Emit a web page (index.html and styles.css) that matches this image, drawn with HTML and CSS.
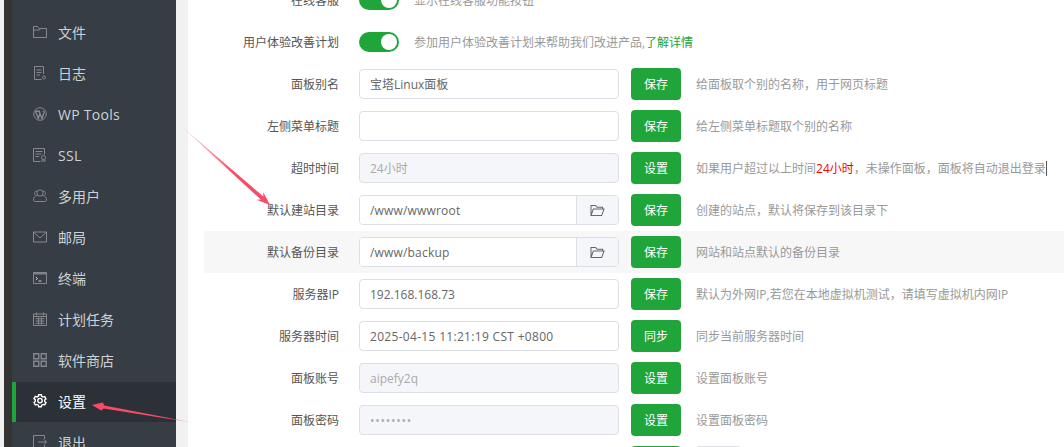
FILE: index.html
```html
<!DOCTYPE html>
<html lang="zh-CN">
<head>
<meta charset="utf-8">
<title>面板设置</title>
<link rel="stylesheet" href="styles.css">
</head>
<body>
<div class="shell">
  <div class="edge"></div>
  <div class="rail"></div>
  <nav class="sidebar">
    <a class="item"><svg class="icon" viewBox="0 0 14 14"><path d="M.5 12.500V1.500h4l1.500 2h7.500v9z M.5 5h6l1-1.500"/></svg><span>文件</span></a>
    <a class="item"><svg class="icon" viewBox="0 0 14 14"><path d="M10.500 8V.5h-9v13h7M3.500 4h5M3.500 6.500h5M3.500 9h3.500"/><circle cx="11" cy="11.500" r="1.500"/></svg><span>日志</span></a>
    <a class="item"><svg class="icon" viewBox="0 0 14 14"><circle cx="7" cy="7" r="6.300"/><path class="thick" d="M2.800 5l2.500 6.500L7 6.500l2 5 2-5.500c.3-1-.3-1.800-1.200-1.800M2 4.300h5M6 4.300l1 2"/></svg><span class="latin">WP Tools</span></a>
    <a class="item"><svg class="icon" viewBox="0 0 14 14"><path d="M7.500 13.500h-7V.5h11v6M2.500 3.500h7M2.500 6h6M2.500 8.500h3.500"/><circle cx="10.500" cy="9.500" r="2"/><path d="M9 11.500v2l1.500-.8 1.500.8v-2"/></svg><span class="latin">SSL</span></a>
    <a class="item"><svg class="icon" viewBox="0 0 14 14"><circle cx="7" cy="4" r="3.200"/><path d="M4.300 6.200C1.500 7 .5 9 .5 11c0 1.200.8 1.500 1.700 1.500h9.600c.9 0 1.700-.3 1.700-1.500 0-2-1-4-3.800-4.800M4 2C2.500 2 1.500 3 1.500 4.500c0 .8.300 1.300.8 1.800M10 2c1.500 0 2.500 1 2.500 2.500 0 .8-.3 1.300-.8 1.800"/></svg><span>多用户</span></a>
    <a class="item"><svg class="icon" viewBox="0 0 14 14"><path d="M.5 2h13v10H.5zM.8 2.500L7 8l6.200-5.500"/></svg><span>邮局</span></a>
    <a class="item"><svg class="icon" viewBox="0 0 14 14"><path d="M.5 1.500h13v11H.5z"/><path class="thick" d="M.5 2.800h13"/><path class="bright" d="M2.800 6l1.700 1.500-1.700 1.500M5.500 10h3"/></svg><span>终端</span></a>
    <a class="item"><svg class="icon" viewBox="0 0 14 14"><path d="M.5 2h13v11.500H.5zM.5 4.500h13M3.500.5v3M10.500.5v3M2.500 6.700h9M2.500 9h9M2.500 11.300h9M5.500 5.500v7M8.500 5.500v7"/></svg><span>计划任务</span></a>
    <a class="item"><svg class="icon" viewBox="0 0 14 14"><path class="thick" d="M.8.800h5v5h-5zM8.200.800h5v5h-5zM.8 8.200h5v5h-5zM8.200 8.200h5v5h-5z"/></svg><span>软件商店</span></a>
    <a class="item active"><svg class="icon" viewBox="0 0 14 14"><path class="thick" d="M5.700.7h2.600l.4 1.700 1.300.7 1.700-.5 1.300 2.200-1.300 1.200v1.500l1.300 1.200-1.300 2.200-1.700-.5-1.300.7-.4 1.700H5.700l-.4-1.700-1.300-.7-1.700.5L1 8.500l1.300-1.200V5.800L1 4.600l1.300-2.200 1.700.5 1.300-.7z"/><circle class="thick" cx="7" cy="6.600" r="2.200"/></svg><span>设置</span></a>
    <a class="item"><svg class="icon" viewBox="0 0 14 14"><path d="M11.500 4V.5H.5v13h11V10M5 7h8.500M11 4.500L13.500 7 11 9.500"/></svg><span>退出</span></a>
  </nav>
  <div class="gutter"></div>
  <main class="main">
    <div class="row"><label class="label">在线客服</label><span class="toggle"></span><span class="tip">显示在线客服功能按钮</span></div>
    <div class="row"><label class="label">用户体验改善计划</label><span class="toggle"></span><span class="tip">参加用户体验改善计划来帮助我们改进产品,<a class="link">了解详情</a></span></div>
    <div class="row"><label class="label">面板别名</label><input class="field" value="宝塔Linux面板"><button class="btn">保存</button><span class="hint">给面板取个别的名称，用于网页标题</span></div>
    <div class="row"><label class="label">左侧菜单标题</label><input class="field" value=""><button class="btn">保存</button><span class="hint">给左侧菜单标题取个别的名称</span></div>
    <div class="row"><label class="label">超时时间</label><input class="field" value="24小时" disabled><button class="btn">设置</button><span class="hint">如果用户超过以上时间<em class="warn">24小时</em>，未操作面板，面板将自动退出登录<i class="caret"></i></span></div>
    <div class="row"><label class="label">默认建站目录</label><div class="group"><input class="group-field" value="/www/wwwroot"><span class="addon"><svg class="folder" viewBox="0 0 16 14"><path d="M1 12.500V1.500h5l1.500 2h6v2M1 12.500h11.500l2.500-7H3.500z"/></svg></span></div><button class="btn">保存</button><span class="hint">创建的站点，默认将保存到该目录下</span></div>
    <div class="row hover"><label class="label">默认备份目录</label><div class="group"><input class="group-field" value="/www/backup"><span class="addon"><svg class="folder" viewBox="0 0 16 14"><path d="M1 12.500V1.500h5l1.500 2h6v2M1 12.500h11.500l2.500-7H3.500z"/></svg></span></div><button class="btn">保存</button><span class="hint">网站和站点默认的备份目录</span></div>
    <div class="row"><label class="label">服务器IP</label><input class="field" value="192.168.168.73"><button class="btn">保存</button><span class="hint">默认为外网IP,若您在本地虚拟机测试，请填写虚拟机内网IP</span></div>
    <div class="row"><label class="label">服务器时间</label><input class="field field-time" value="2025-04-15 11:21:19 CST +0800"><button class="btn">同步</button><span class="hint">同步当前服务器时间</span></div>
    <div class="row"><label class="label">面板账号</label><input class="field" value="aipefy2q" disabled><button class="btn">设置</button><span class="hint">设置面板账号</span></div>
    <div class="row"><label class="label">面板密码</label><input class="field field-secret" type="password" value="password" disabled><button class="btn">设置</button><span class="hint">设置面板密码</span></div>
    <div class="row"><label class="label">绑定账号</label><input class="field" value="" disabled><button class="btn">设置</button><button class="btn-plain">解绑</button></div>
  </main>
</div>
<svg class="arrows" viewBox="0 0 1064 447">
  <defs>
    <linearGradient id="fade-a" gradientUnits="userSpaceOnUse" x1="180" y1="125" x2="232" y2="171">
      <stop offset="0" stop-color="#fb4a66" stop-opacity=".1"/>
      <stop offset="1" stop-color="#fb4a66"/>
    </linearGradient>
    <linearGradient id="fade-b" gradientUnits="userSpaceOnUse" x1="195" y1="423" x2="165" y2="418">
      <stop offset="0" stop-color="#fb4a66" stop-opacity=".1"/>
      <stop offset="1" stop-color="#fb4a66"/>
    </linearGradient>
  </defs>
  <polygon fill="url(#fade-a)" points="180,125 263.300,196.500 263.300,192.300 270,205 256.700,199.700 260.700,199.500"/>
  <polygon fill="url(#fade-b)" points="195,423 104.300,405.500 102.800,402.500 92,405 101.200,410.500 103.700,408.500"/>
</svg>
</body>
</html>
```
FILE: styles.css
```css
* { box-sizing: border-box; }
html, body { margin: 0; height: 447px; overflow: hidden; background: #fff; }
body { position: relative; font-family: "Open Sans", "Noto Sans CJK SC", sans-serif; font-size: 12px; }
.shell { display: flex; height: 447px; overflow: hidden; }
.edge { width: 4px; background: #f0f0f0; flex: none; }
.rail { width: 8px; background: #333; flex: none; }
.sidebar { width: 164px; flex: none; background: #363d44; padding-top: 13px; display: flex; flex-direction: column; gap: 1px; }
.item { height: 40px; flex: none; display: flex; align-items: center; gap: 11px; padding: 0 0 2px 21px; color: #cdd2d6; font-size: 14px; }
.item.active { background: #2c3138; color: #fff; border-left: 4px solid #20a53a; padding-left: 17px; }
.latin { letter-spacing: .28px; }
.icon { width: 14px; height: 14px; flex: none; fill: none; stroke: #85898d; stroke-width: 1; overflow: visible; }
.icon .thick { stroke-width: 1.4; }
.icon .bright { stroke: #d0d3d6; }
.active .icon { stroke: #fff; }
.gutter { width: 12px; flex: none; background: #f1f1f1; }
.main { flex: 1; min-width: 0; margin-top: -21px; padding-left: 16px; }
.row { display: flex; align-items: center; height: 42px; color: #555; }
.row.hover { background: #f7f7f7; }
.label { width: 135px; flex: none; margin-right: 20px; text-align: right; color: #555; }
.toggle { width: 40px; height: 20px; flex: none; border-radius: 10px; background: #20a53a; display: flex; justify-content: flex-end; align-items: center; padding-right: 2px; }
.toggle::after { content: ""; width: 16px; height: 16px; border-radius: 50%; background: #fff; }
.tip { margin-left: 15px; color: #999; white-space: nowrap; }
.link { color: #20a53a; }
.field { width: 260px; height: 30px; flex: none; border: 1px solid #dcdfe6; border-radius: 4px; padding: 0 10px; font: inherit; color: #666; background: #fff; outline: none; }
.field:disabled { background: #f5f6fa; color: #aaa; }
.field-time { letter-spacing: .31px; }
.field-secret { letter-spacing: .75px; }
.group { width: 260px; height: 30px; flex: none; display: flex; border: 1px solid #dcdfe6; border-radius: 4px; overflow: hidden; background: #fff; }
.group-field { flex: 1; min-width: 0; border: 0; padding: 0 10px; font: inherit; letter-spacing: .18px; color: #666; outline: none; background: #fff; }
.addon { width: 42px; flex: none; background: #f5f6fa; border-left: 1px solid #dcdfe6; display: flex; align-items: center; justify-content: center; }
.folder { width: 15px; height: 13px; fill: none; stroke: #666; stroke-width: 1.100; }
.btn { width: 50px; height: 32px; flex: none; margin-left: 12px; border: 0; border-radius: 4px; background: #20a53a; color: #fff; font: inherit; padding: 0; }
.btn-plain { width: 47px; height: 32px; flex: none; margin-left: 14px; border: 1px solid #dcdfe6; border-radius: 4px; background: #fff; color: #666; font: inherit; padding: 0; }
.hint { margin-left: 15px; color: #999; white-space: nowrap; display: flex; align-items: center; }
.warn { color: #f00; font-style: normal; }
.caret { width: 1px; height: 15px; background: #555; }
.arrows { position: absolute; left: 0; top: 0; width: 1064px; height: 447px; pointer-events: none; }
```
